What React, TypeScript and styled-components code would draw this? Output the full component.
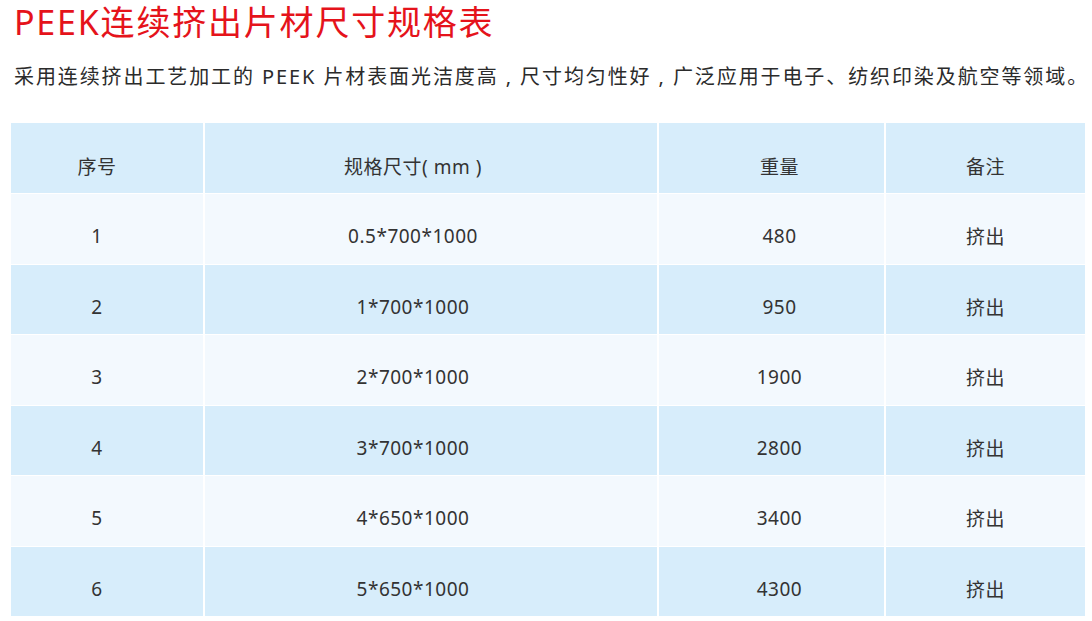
import React from 'react'
import styled, { createGlobalStyle } from 'styled-components'

const GlobalStyle = createGlobalStyle`
    html, body {
        margin: 0;
        padding: 0;
        background: #ffffff;
    }
    body {
        font-family: 'Noto Sans', 'Noto Sans CJK SC', sans-serif;
        color: #333333;
    }
`

const Page = styled.div`
    width: 1092px;
    height: 621px;
    padding: 0 0 0 11px;
    box-sizing: border-box;
    overflow: hidden;
`

const Title = styled.h1`
    margin: 0;
    padding: 0 0 0 3px;
    font-family: 'Noto Sans', 'Noto Sans CJK SC', sans-serif;
    font-size: 34px;
    font-weight: 400;
    letter-spacing: 1.8px;
    line-height: 44px;
    color: #e5131b;
    white-space: nowrap;
`

const Intro = styled.p`
    margin: 19px 0 0 3px;
    font-size: 20px;
    letter-spacing: 1.9px;
    line-height: 28px;
    color: #2b2b2b;
    white-space: nowrap;
`

const Table = styled.div`
    margin-top: 32px;
    display: grid;
    grid-template-columns: 192px 454px 227px 201px;
    grid-template-rows: 71px;
    grid-auto-rows: 70.5px;
`

const Cell = styled.div<{ $tone: 'blue' | 'pale', $col: number }>`
    display: flex;
    align-items: center;
    justify-content: center;
    box-sizing: border-box;
    padding-top: 15px;
    padding-left: ${ p => p.$col === 2 ? '16px' : '0' };
    padding-right: ${ p => p.$col === 0 ? '20px' : p.$col === 1 ? '36px' : '0' };
    background: ${ p => p.$tone === 'blue' ? '#d7edfb' : '#f3f9fe' };
    border-left: ${ p => p.$col === 0 ? 'none' : '2px solid #ffffff' };
    border-bottom: 1px solid #ffffff;
    font-size: 19px;
    letter-spacing: 0.5px;
    color: #333333;
`

const header = ['序号', '规格尺寸( mm )', '重量', '备注']

const rows = [
    ['1', '0.5*700*1000', '480', '挤出'],
    ['2', '1*700*1000', '950', '挤出'],
    ['3', '2*700*1000', '1900', '挤出'],
    ['4', '3*700*1000', '2800', '挤出'],
    ['5', '4*650*1000', '3400', '挤出'],
    ['6', '5*650*1000', '4300', '挤出']
]

export default function App() {
    return (
        <Page>
            <GlobalStyle />
            <Title>PEEK连续挤出片材尺寸规格表</Title>
            <Intro>采用连续挤出工艺加工的 PEEK 片材表面光洁度高 , 尺寸均匀性好 , 广泛应用于电子、纺织印染及航空等领域。</Intro>
            <Table>
                { header.map((h, i) => (
                    <Cell key={ 'h' + i } $tone='blue' $col={ i }>{ h }</Cell>
                )) }
                { rows.map((r, ri) => r.map((c, ci) => (
                    <Cell key={ ri + '-' + ci } $tone={ ri % 2 === 0 ? 'pale' : 'blue' } $col={ ci }>
                        { c }
                    </Cell>
                ))) }
            </Table>
        </Page>
    )
}
